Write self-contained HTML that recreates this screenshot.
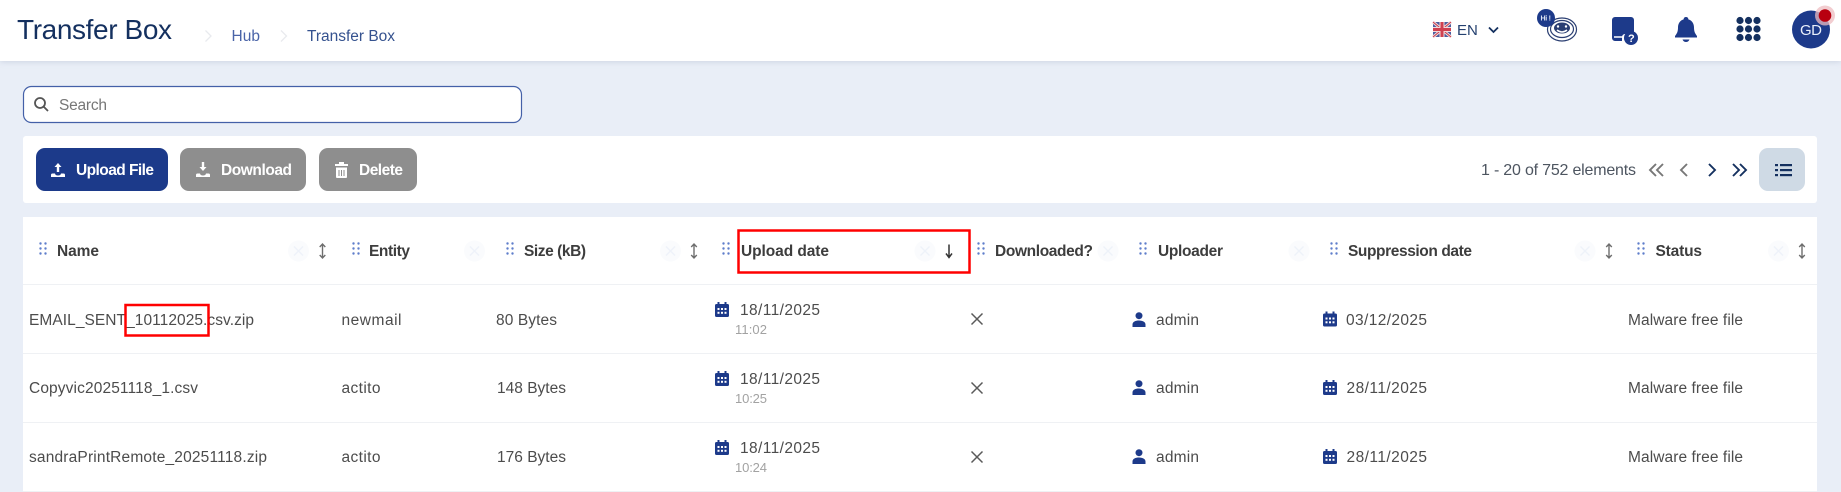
<!DOCTYPE html>
<html><head><meta charset="utf-8"><title>Transfer Box</title>
<style>
html,body{margin:0;padding:0;background:#e9eef7;width:1841px;height:492px;overflow:hidden}
svg{display:block}
text{font-family:"Liberation Sans",sans-serif}
.h{font-size:15.5px;font-weight:700;fill:#3d3d3d}
.r{font-size:15.5px;fill:#4c4c4c}
.t{font-size:13px;fill:#a2a2a2}
.b{font-size:15.5px;font-weight:700;fill:#fff}
</style></head><body>
<svg width="1841" height="492" viewBox="0 0 1841 492" xmlns="http://www.w3.org/2000/svg">
<defs>
<filter id="sh" x="-5%" y="-20%" width="110%" height="150%"><feDropShadow dx="0" dy="1" stdDeviation="3" flood-color="#8b97b0" flood-opacity=".3"/></filter>
<g id="drag" fill="#5f7ecb"><circle cx="1.5" cy="1.5" r="1.2"/><circle cx="6.5" cy="1.5" r="1.2"/><circle cx="1.5" cy="6.5" r="1.2"/><circle cx="6.5" cy="6.5" r="1.2"/><circle cx="1.5" cy="11.5" r="1.2"/><circle cx="6.5" cy="11.5" r="1.2"/></g>
<g id="cx"><circle r="10.5" fill="#fafbfd"/><path d="M-4.5-4.5 4.5 4.5M4.5-4.5-4.5 4.5" stroke="#eef2f9" stroke-width="1.4" fill="none"/></g>
<g id="sort"><path d="M0-6.500V6.500M-2.800-4 0-7 2.800-4M-2.800 4 0 7 2.800 4" stroke="#6e6e6e" stroke-width="1.400" fill="none"/></g>
<g id="cal" fill="#1d3a8a"><path d="M2.5 0h2v2h5V0h2v2h1A1.5 1.5 0 0 1 14 3.500V13.500A1.500 1.500 0 0 1 12.500 15H1.500A1.500 1.500 0 0 1 0 13.500V3.500A1.500 1.500 0 0 1 1.500 2h1z"/><g fill="#fff"><rect x="2.500" y="6" width="2" height="2"/><rect x="6" y="6" width="2" height="2"/><rect x="9.500" y="6" width="2" height="2"/><rect x="2.500" y="9.800" width="2" height="2"/><rect x="6" y="9.800" width="2" height="2"/><rect x="9.500" y="9.800" width="2" height="2"/></g></g>
<g id="user" fill="#1d3a8a"><circle cx="6.500" cy="3.700" r="3.500"/><path d="M0 15V12.500C0 9.800 3 8.500 6.500 8.500S13 9.800 13 12.500V15z"/></g>
<g id="x"><path d="M-5.500-5.500 5.500 5.500M5.500-5.500-5.500 5.500" stroke="#5a5a5a" stroke-width="1.500" fill="none"/></g>
</defs>

<rect x="0" y="0" width="1841" height="61" fill="#fff" filter="url(#sh)"/>
<text x="17" y="39" font-size="28" fill="#14305f" textLength="155" lengthAdjust="spacing">Transfer Box</text>
<path d="M205.500 30.500 211 36l-5.500 5.500M281 30.500 286.500 36 281 41.500" stroke="#e8eaee" stroke-width="1.300" fill="none"/>
<text x="231.500" y="41" font-size="15.500" fill="#4a64a8" textLength="28.500" lengthAdjust="spacing">Hub</text>
<text x="307" y="41" font-size="15.500" fill="#35528f" textLength="88" lengthAdjust="spacing">Transfer Box</text>

<!-- flag -->
<g><rect x="1433" y="22" width="18" height="15" rx="2.500" fill="#4a5c9e"/><path d="M1433 22 1451 37M1451 22 1433 37" stroke="#f1dada" stroke-width="3"/><path d="M1433 22 1451 37M1451 22 1433 37" stroke="#c8384a" stroke-width="1"/><path d="M1442 22V37M1433 29.500H1451" stroke="#f1dada" stroke-width="5"/><path d="M1442 22V37M1433 29.500H1451" stroke="#cf4050" stroke-width="3"/></g>
<text x="1457" y="35" font-size="15" fill="#24406f">EN</text>
<path d="M1489 27.500 1493.500 32 1498 27.500" stroke="#14305f" stroke-width="1.800" fill="none"/>
<!-- mascot -->
<g fill="none" stroke="#2b3f72" stroke-width="1.200"><ellipse cx="1562" cy="29.500" rx="14.500" ry="11.500"/><ellipse cx="1562" cy="29" rx="11.500" ry="8.500"/></g>
<ellipse cx="1562" cy="28" rx="8" ry="5.500" fill="#2b3f72"/><path d="M1557 30q5 4 10 0" stroke="#fff" stroke-width="1.500" fill="none"/><circle cx="1558" cy="26.500" r="1.200" fill="#fff"/><circle cx="1566" cy="26.500" r="1.200" fill="#fff"/>
<circle cx="1546" cy="18" r="9" fill="#1d3a8a"/><text x="1540.500" y="20.500" font-size="7" font-weight="700" fill="#dfe6f5" textLength="10.500" lengthAdjust="spacing">Hi !</text>
<!-- doc help -->
<path d="M1615 17h16a3 3 0 0 1 3 3v14h-9a3 3 0 0 0-3 3v4h-7a3 3 0 0 1-3-3V20a3 3 0 0 1 3-3z" fill="#1d3a8a"/>
<path d="M1614 37h9" stroke="#fff" stroke-width="1.500"/>
<circle cx="1631" cy="38" r="7" fill="#1d3a8a"/><text x="1628" y="42" font-size="11" font-weight="700" fill="#fff">?</text>
<!-- bell -->
<path d="M1686 17c1.500 0 2.300 1 2.400 2.400 3.600 1 5.600 4.200 5.600 8.100 0 4 1 6 3 8.500v1.500h-22V36c2-2.500 3-4.500 3-8.500 0-3.900 2-7.100 5.600-8.100.1-1.400.900-2.400 2.400-2.400z" fill="#1d3a8a"/>
<path d="M1682.500 39.500h7q-1 2.500-3.500 2.500t-3.500-2.500z" fill="#1d3a8a"/>
<!-- grid -->
<g fill="#14305f"><circle cx="1740" cy="20.500" r="3.600"/><circle cx="1748.500" cy="20.500" r="3.600"/><circle cx="1757" cy="20.500" r="3.600"/><circle cx="1740" cy="29" r="3.600"/><circle cx="1748.500" cy="29" r="3.600"/><circle cx="1757" cy="29" r="3.600"/><circle cx="1740" cy="37.500" r="3.600"/><circle cx="1748.500" cy="37.500" r="3.600"/><circle cx="1757" cy="37.500" r="3.600"/></g>
<!-- avatar -->
<circle cx="1811" cy="29.500" r="19" fill="#1d3a8a"/>
<text x="1800" y="35" font-size="15" fill="#e8eefa" textLength="22" lengthAdjust="spacing">GD</text>
<circle cx="1825" cy="15.500" r="10" fill="#eebcc0" opacity=".75"/><circle cx="1825" cy="15.500" r="6.300" fill="#b80010"/>

<!-- search -->
<rect x="23.500" y="86.500" width="498" height="36" rx="8" fill="#fff" stroke="#4460a8" stroke-width="1.200"/>
<circle cx="40" cy="103" r="5" fill="none" stroke="#555" stroke-width="1.800"/><path d="M43.500 106.500 48 111" stroke="#555" stroke-width="1.800"/>
<text x="59" y="110" font-size="15.500" fill="#777" textLength="48" lengthAdjust="spacing">Search</text>

<!-- toolbar -->
<rect x="23" y="136" width="1794" height="67" rx="3" fill="#fff"/>
<rect x="36" y="148" width="132" height="43" rx="9" fill="#1c3a8a"/>
<rect x="180" y="148" width="126" height="43" rx="9" fill="#8e8e8e"/>
<rect x="319" y="148" width="98" height="43" rx="9" fill="#8e8e8e"/>
<g fill="#fff"><path d="M58 163 54.500 167h2.300v5h2.400v-5h2.300z"/><path d="M51 177v-2q0-1.500 1.500-1.500h2.500q.3 2 3 2t3-2h2.500q1.500 0 1.500 1.500v2z"/></g>
<text class="b" x="76" y="175" textLength="78" lengthAdjust="spacing">Upload File</text>
<g fill="#fff"><path d="M203 171 206.500 167h-2.300v-5h-2.400v5h-2.300z"/><path d="M196 177v-2q0-1.500 1.500-1.500h2.500q.3 2 3 2t3-2h2.500q1.500 0 1.500 1.500v2z"/></g>
<text class="b" x="221" y="175" textLength="71" lengthAdjust="spacing">Download</text>
<g fill="#fff"><rect x="335" y="164" width="13" height="2"/><rect x="339" y="162" width="5" height="2"/><path d="M336 167.500h11V177a1 1 0 0 1-1 1h-9a1 1 0 0 1-1-1z"/></g>
<path d="M339 170v6M341.500 170v6M344 170v6" stroke="#8e8e8e" stroke-width="1"/>
<text class="b" x="359" y="175" textLength="44" lengthAdjust="spacing">Delete</text>

<text x="1481" y="175" font-size="16" fill="#4d5560" textLength="155" lengthAdjust="spacing">1 - 20 of 752 elements</text>
<path d="M1656 164 1650 170 1656 176M1663 164 1657 170 1663 176M1687 164 1681 170 1687 176" stroke="#777" stroke-width="1.900" fill="none"/>
<path d="M1709 164 1715 170 1709 176M1733 164 1739 170 1733 176M1740 164 1746 170 1740 176" stroke="#14305f" stroke-width="1.900" fill="none"/>
<rect x="1759" y="148" width="46" height="43" rx="9" fill="#cfdae5"/>
<g fill="#14305f"><rect x="1775" y="164" width="3" height="2.200"/><rect x="1775" y="169" width="3" height="2.200"/><rect x="1775" y="174" width="3" height="2.200"/><rect x="1780" y="164" width="12" height="2.200"/><rect x="1780" y="169" width="12" height="2.200"/><rect x="1780" y="174" width="12" height="2.200"/></g>

<!-- table -->
<rect x="23" y="217" width="1794" height="275" fill="#fff"/>
<path d="M23 284.500H1817M23 353.500H1817M23 422.500H1817M23 491.500H1817" stroke="#eff1f4" stroke-width="1"/>

<use href="#drag" x="39" y="242"/><text class="h" x="57" y="256" textLength="42" lengthAdjust="spacing">Name</text><use href="#cx" x="298.500" y="251"/><use href="#sort" x="322.500" y="251"/>
<use href="#drag" x="352" y="242"/><text class="h" x="369" y="256" textLength="41" lengthAdjust="spacing">Entity</text><use href="#cx" x="474.500" y="251"/>
<use href="#drag" x="506" y="242"/><text class="h" x="524" y="256" textLength="62" lengthAdjust="spacing">Size (kB)</text><use href="#cx" x="670.500" y="251"/><use href="#sort" x="694" y="251"/>
<use href="#drag" x="722" y="242"/><text class="h" x="741" y="256" textLength="88" lengthAdjust="spacing">Upload date</text><use href="#cx" x="925" y="251"/>
<path d="M949 244.500V257M946 253.500 949 257.500 952 253.500" stroke="#333" stroke-width="1.500" fill="none"/>
<use href="#drag" x="977" y="242"/><text class="h" x="995" y="256" textLength="98" lengthAdjust="spacing">Downloaded?</text><use href="#cx" x="1108" y="251"/>
<use href="#drag" x="1139" y="242"/><text class="h" x="1158" y="256" textLength="65" lengthAdjust="spacing">Uploader</text><use href="#cx" x="1299" y="251"/>
<use href="#drag" x="1330" y="242"/><text class="h" x="1348" y="256" textLength="124" lengthAdjust="spacing">Suppression date</text><use href="#cx" x="1585" y="251"/><use href="#sort" x="1609" y="251"/>
<use href="#drag" x="1637" y="242"/><text class="h" x="1655.500" y="256" textLength="46.500" lengthAdjust="spacing">Status</text><use href="#cx" x="1778.500" y="251"/><use href="#sort" x="1802" y="251"/>

<!-- row 1 -->
<text class="r" x="29" y="325" textLength="225" lengthAdjust="spacing">EMAIL_SENT_10112025.csv.zip</text>
<text class="r" x="341.500" y="325" textLength="60" lengthAdjust="spacing">newmail</text>
<text class="r" x="496" y="325" textLength="61" lengthAdjust="spacing">80 Bytes</text>
<use href="#cal" x="715" y="302"/><text class="r" x="740" y="315" textLength="80" lengthAdjust="spacing">18/11/2025</text><text class="t" x="735" y="334" textLength="32" lengthAdjust="spacing">11:02</text>
<use href="#x" x="977" y="319"/>
<use href="#user" x="1132.500" y="312"/><text class="r" x="1156" y="325" textLength="43" lengthAdjust="spacing">admin</text>
<use href="#cal" x="1323" y="311.500"/><text class="r" x="1346" y="325" textLength="81" lengthAdjust="spacing">03/12/2025</text>
<text class="r" x="1628" y="325" textLength="115" lengthAdjust="spacing">Malware free file</text>
<!-- row 2 -->
<text class="r" x="29" y="393" textLength="169" lengthAdjust="spacing">Copyvic20251118_1.csv</text>
<text class="r" x="341.500" y="393" textLength="39" lengthAdjust="spacing">actito</text>
<text class="r" x="497" y="393" textLength="69" lengthAdjust="spacing">148 Bytes</text>
<use href="#cal" x="715" y="371"/><text class="r" x="740" y="384" textLength="80" lengthAdjust="spacing">18/11/2025</text><text class="t" x="735" y="403" textLength="32" lengthAdjust="spacing">10:25</text>
<use href="#x" x="977" y="388"/>
<use href="#user" x="1132.500" y="380"/><text class="r" x="1156" y="393" textLength="43" lengthAdjust="spacing">admin</text>
<use href="#cal" x="1323" y="380"/><text class="r" x="1346.500" y="393" textLength="80.500" lengthAdjust="spacing">28/11/2025</text>
<text class="r" x="1628" y="393" textLength="115" lengthAdjust="spacing">Malware free file</text>
<!-- row 3 -->
<text class="r" x="29" y="462" textLength="238" lengthAdjust="spacing">sandraPrintRemote_20251118.zip</text>
<text class="r" x="341.500" y="462" textLength="39" lengthAdjust="spacing">actito</text>
<text class="r" x="497" y="462" textLength="69" lengthAdjust="spacing">176 Bytes</text>
<use href="#cal" x="715" y="440"/><text class="r" x="740" y="453" textLength="80" lengthAdjust="spacing">18/11/2025</text><text class="t" x="735" y="472" textLength="32" lengthAdjust="spacing">10:24</text>
<use href="#x" x="977" y="457"/>
<use href="#user" x="1132.500" y="449"/><text class="r" x="1156" y="462" textLength="43" lengthAdjust="spacing">admin</text>
<use href="#cal" x="1323" y="449"/><text class="r" x="1346.500" y="462" textLength="80.500" lengthAdjust="spacing">28/11/2025</text>
<text class="r" x="1628" y="462" textLength="115" lengthAdjust="spacing">Malware free file</text>

<!-- red annotation boxes -->
<rect x="125.500" y="305" width="83" height="30.500" fill="none" stroke="#f00" stroke-width="2.500"/>
<rect x="738.500" y="230.500" width="231" height="42" fill="none" stroke="#f00" stroke-width="2.500"/>
</svg>
</body></html>
